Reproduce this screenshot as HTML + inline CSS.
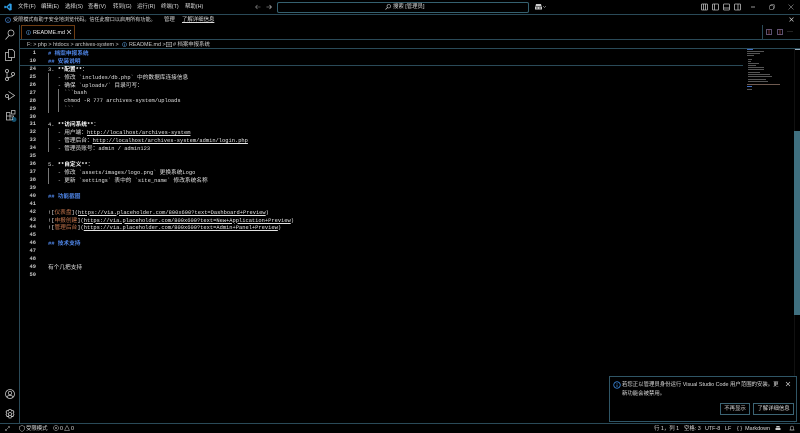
<!DOCTYPE html>
<html><head><meta charset="utf-8"><style>
html,body{margin:0;padding:0;width:800px;height:433px;overflow:hidden;background:#000}
body{position:relative;font-family:"Liberation Sans","Noto Sans CJK SC",sans-serif;color:#ddd;font-size:5.4px}
.a{position:absolute;white-space:pre}
.b{position:absolute;background:#2a4a58}
.ln{position:absolute;width:36px;text-align:right;left:0;font:bold 5.4px/8px "Liberation Mono",monospace;color:#c8c8c8}
.c{position:absolute;left:48px;font:5.4px/8px "Liberation Mono","Noto Sans CJK SC",monospace;color:#e0e0e0;white-space:pre}
.c i{font-style:normal;font-size:5.7px;font-family:"Noto Sans CJK SC",sans-serif;line-height:8px}
.h{color:#4f86e8;font-weight:bold}.w{color:#fff;font-weight:bold}.u{text-decoration:underline;color:#e4e4e4}.o{color:#c9784e}
.g{position:absolute;width:1px;background:#777}
svg{position:absolute;overflow:visible}
.m{position:absolute;height:1px;background:#555}
.btn{position:absolute;border:1px solid #3c6474;color:#ddd;font-size:5.4px;line-height:10px;text-align:center;top:403px;height:10px}
</style></head><body>
<!-- title bar -->
<svg style="left:4px;top:3px" width="8" height="8" viewBox="0 0 24 24"><path d="M17 1 7 11 3 8 1 9v6l2 1 4-3 10 10 6-2V3zM17 7v10l-6-5z" fill="#2f9fe8"/></svg>
<div class="a" style="left:18px;top:3px;line-height:8px;color:#ddd">文件(F)</div>
<div class="a" style="left:41px;top:3px;line-height:8px">编辑(E)</div>
<div class="a" style="left:65px;top:3px;line-height:8px">选择(S)</div>
<div class="a" style="left:88px;top:3px;line-height:8px">查看(V)</div>
<div class="a" style="left:113px;top:3px;line-height:8px">转到(G)</div>
<div class="a" style="left:137px;top:3px;line-height:8px">运行(R)</div>
<div class="a" style="left:161px;top:3px;line-height:8px">终端(T)</div>
<div class="a" style="left:185px;top:3px;line-height:8px">帮助(H)</div>
<svg style="left:255px;top:4px" width="6" height="6" viewBox="0 0 12 12"><path d="M11 6H1M5 2 1 6l4 4" fill="none" stroke="#888" stroke-width="1.2"/></svg>
<svg style="left:266px;top:4px" width="6" height="6" viewBox="0 0 12 12"><path d="M1 6h10M7 2l4 4-4 4" fill="none" stroke="#bbb" stroke-width="1.2"/></svg>
<div class="a" style="left:277px;top:2px;width:250px;height:9px;border:1px solid #35606f;border-radius:2px"></div>
<svg style="left:385px;top:4px" width="6" height="6" viewBox="0 0 12 12"><circle cx="7.5" cy="4.5" r="3.5" fill="none" stroke="#ccc" stroke-width="1.2"/><path d="M5 7 1 11" stroke="#ccc" stroke-width="1.2"/></svg>
<div class="a" style="left:393px;top:3px;line-height:8px">搜索 [管理员]</div>
<svg style="left:534px;top:3px" width="9" height="8" viewBox="0 0 18 16"><path d="M4 2h10l1 4H3zM2 7h14v6H2zM5 14h8" fill="#ccc"/><circle cx="6" cy="10" r="1.3" fill="#000"/><circle cx="12" cy="10" r="1.3" fill="#000"/></svg>
<svg style="left:543px;top:6px" width="3" height="2" viewBox="0 0 6 4"><path d="M0 0l3 3 3-3" fill="none" stroke="#ccc"/></svg>
<svg style="left:701px;top:3px" width="68" height="8" viewBox="0 0 68 8" fill="none" stroke="#bbb" stroke-width=".8"><rect x=".5" y="1" width="6" height="6" rx=".7"/><path d="M2.5 1v6M4.5 1v6"/><rect x="11.5" y="1" width="6" height="6" rx=".7"/><path d="M13.5 1v6"/><rect x="22.5" y="1" width="6" height="6" rx=".7"/><path d="M22.5 5h6"/><rect x="33.5" y="1" width="6" height="6" rx=".7"/><path d="M37 1v6"/><path d="M50 4h4"/></svg>
<svg style="left:769px;top:4px" width="6" height="6" viewBox="0 0 12 12" fill="none" stroke="#bbb"><rect x="1.5" y="3.5" width="7" height="7"/><path d="M3.5 3.5v-2h7v7h-2"/></svg>
<svg style="left:788px;top:4px" width="6" height="6" viewBox="0 0 12 12" stroke="#bbb"><path d="M1 1l10 10M11 1 1 11"/></svg>
<div class="b" style="left:0;top:14px;width:800px;height:1px"></div>
<!-- banner -->
<svg style="left:5px;top:17px" width="6" height="6" viewBox="0 0 12 12"><circle cx="6" cy="6" r="5" fill="none" stroke="#4a90e8" stroke-width="1.2"/><path d="M6 5v4M6 3v1" stroke="#4a90e8" stroke-width="1.2"/></svg>
<div class="a" style="left:13px;top:16px;line-height:8px;font-size:5.1px">受限模式有助于安全地浏览代码。信任此窗口以启用所有功能。</div>
<div class="a" style="left:164px;top:16px;line-height:8px">管理</div>
<div class="a" style="left:182px;top:16px;line-height:8px;text-decoration:underline">了解详细信息</div>
<svg style="left:789px;top:17px" width="5" height="5" viewBox="0 0 10 10" stroke="#ccc" stroke-width="1.2"><path d="M1 1l8 8M9 1 1 9"/></svg>
<!-- activity bar -->
<div class="b" style="left:19px;top:25px;width:1px;height:398px"></div>
<svg style="left:5px;top:29px" width="10" height="11" viewBox="0 0 20 22" fill="none" stroke="#ccc" stroke-width="1.5"><circle cx="12" cy="8" r="6"/><path d="M8 13 1 21"/></svg>
<svg style="left:5px;top:49px" width="10" height="12" viewBox="0 0 20 24" fill="none" stroke="#ccc" stroke-width="1.5"><path d="M7 1h8l4 4v12H7zM7 7H1v16h12v-6"/></svg>
<svg style="left:5px;top:69px" width="10" height="12" viewBox="0 0 20 24" fill="none" stroke="#ccc" stroke-width="1.5"><circle cx="4" cy="4" r="3"/><circle cx="4" cy="20" r="3"/><circle cx="16" cy="10" r="3"/><path d="M4 7v10M16 13c0 3-6 3-12 5"/></svg>
<svg style="left:5px;top:90px" width="10" height="11" viewBox="0 0 20 22" fill="none" stroke="#ccc" stroke-width="1.5"><path d="M7 3l12 8-12 8v-5"/><circle cx="4" cy="12" r="3"/></svg>
<svg style="left:6px;top:110px" width="11" height="12" viewBox="0 0 22 24" fill="none" stroke="#ccc" stroke-width="1.5"><path d="M1 5h7v7h7v8H1zM1 12h7v8M11 1h7v7h-7z"/><circle cx="16" cy="19" r="5" fill="#12506f" stroke="none"/></svg>
<div class="a" style="left:11px;top:115px;font-size:4.5px;line-height:7px">1</div>
<svg style="left:5px;top:389px" width="10" height="10" viewBox="0 0 20 20" fill="none" stroke="#ccc" stroke-width="1.5"><circle cx="10" cy="10" r="9"/><circle cx="10" cy="8" r="3.5"/><path d="M4 16c1-4 11-4 12 0"/></svg>
<svg style="left:5px;top:409px" width="10" height="10" viewBox="0 0 20 20" fill="none" stroke="#ccc" stroke-width="1.5"><circle cx="10" cy="10" r="3"/><path d="M8 1h4l1 3 3-1 2 3-2 3 2 2-2 4-3-1-1 4H8l-1-4-3 1-2-4 2-2-2-3 2-3 3 1z"/></svg>
<!-- tab -->
<div class="a" style="left:21px;top:25px;width:52px;height:13px;border:1px solid #6e3c12"></div>
<svg style="left:26px;top:30px" width="5" height="5" viewBox="0 0 10 10"><circle cx="5" cy="5" r="4" fill="none" stroke="#5aa0e0"/><path d="M5 4v4M5 2v1" stroke="#5aa0e0"/></svg>
<div class="a" style="left:33px;top:28.5px;line-height:8px;color:#eee">README.md</div>
<svg style="left:67px;top:30px" width="4" height="4" viewBox="0 0 8 8" stroke="#ddd" stroke-width="1.1"><path d="M0 0l8 8M8 0 0 8"/></svg>
<div class="b" style="left:762px;top:25px;width:1px;height:14px"></div>
<svg style="left:766px;top:29px" width="6" height="6" viewBox="0 0 12 12" fill="none" stroke="#b8a0e0"><rect x="1" y="1" width="10" height="10"/><path d="M6 1v10" stroke="#e06070"/></svg>
<svg style="left:777px;top:29px" width="6" height="6" viewBox="0 0 12 12" fill="none" stroke="#b8a0e0"><rect x="1" y="1" width="10" height="10"/><path d="M6 1v10" stroke="#e06070"/></svg>
<div class="a" style="left:787px;top:29px;line-height:6px;font-size:6px;color:#bbb">···</div>
<div class="b" style="left:20px;top:39px;width:780px;height:1px"></div>
<!-- breadcrumb -->
<div class="a" style="left:27px;top:40.5px;line-height:8px;color:#ccc">F: &gt; php &gt; htdocs &gt; archives-system &gt;</div>
<svg style="left:122px;top:42px" width="5" height="5" viewBox="0 0 10 10"><circle cx="5" cy="5" r="4" fill="none" stroke="#5aa0e0"/><path d="M5 4v4M5 2v1" stroke="#5aa0e0"/></svg>
<div class="a" style="left:129px;top:40.5px;line-height:8px;color:#ccc">README.md &gt;</div>
<svg style="left:166px;top:42px" width="6" height="5" viewBox="0 0 12 10" fill="none" stroke="#ccc"><rect x=".5" y=".5" width="11" height="9"/><path d="M3 4h6M3 6h6"/></svg>
<div class="a" style="left:173px;top:40.5px;line-height:8px;color:#ccc"># 档案申报系统</div>
<div class="b" style="left:20px;top:48px;width:780px;height:1px"></div>
<!-- sticky -->
<div class="ln" style="top:49px">1</div><div class="c h" style="top:49px"># <i>档案申报系统</i></div>
<div class="ln" style="top:57px">10</div><div class="c h" style="top:57px">## <i>安装说明</i></div>
<div class="b" style="left:20px;top:65px;width:723px;height:1px"></div>
<!-- editor -->
<div class="ln" style="top:65px">24</div><div class="c" style="top:65px">3. <span class="w">**<i>配置</i>**</span><i>：</i></div>
<div class="ln" style="top:73px">25</div><div class="c" style="top:73px">   - <i>修改</i> &#96;includes/db.php&#96; <i>中的数据库连接信息</i></div>
<div class="ln" style="top:81px">26</div><div class="c" style="top:81px">   - <i>确保</i> &#96;uploads/&#96; <i>目录可写：</i></div>
<div class="ln" style="top:89px">27</div><div class="c" style="top:89px">     &#96;&#96;&#96;bash</div>
<div class="ln" style="top:97px">28</div><div class="c" style="top:97px">     chmod -R 777 archives-system/uploads</div>
<div class="ln" style="top:105px">29</div><div class="c" style="top:105px">     &#96;&#96;&#96;</div>
<div class="ln" style="top:112.5px">30</div>
<div class="ln" style="top:120px">31</div><div class="c" style="top:120px">4. <span class="w">**<i>访问系统</i>**</span><i>：</i></div>
<div class="ln" style="top:128px">32</div><div class="c" style="top:128px">   - <i>用户端：</i><span class="u">http://localhost/archives-system</span></div>
<div class="ln" style="top:136px">33</div><div class="c" style="top:136px">   - <i>管理后台：</i><span class="u">http://localhost/archives-system/admin/login.php</span></div>
<div class="ln" style="top:144px">34</div><div class="c" style="top:144px">   - <i>管理员账号：</i>admin / admin123</div>
<div class="ln" style="top:152px">35</div>
<div class="ln" style="top:160px">36</div><div class="c" style="top:160px">5. <span class="w">**<i>自定义</i>**</span><i>：</i></div>
<div class="ln" style="top:167.5px">37</div><div class="c" style="top:167.5px">   - <i>修改</i> &#96;assets/images/logo.png&#96; <i>更换系统</i>Logo</div>
<div class="ln" style="top:175.5px">38</div><div class="c" style="top:175.5px">   - <i>更新</i> &#96;settings&#96; <i>表中的</i> &#96;site_name&#96; <i>修改系统名称</i></div>
<div class="ln" style="top:183.5px">39</div>
<div class="ln" style="top:191.5px">40</div><div class="c h" style="top:191.5px">## <i>功能截图</i></div>
<div class="ln" style="top:199.5px">41</div>
<div class="ln" style="top:207.5px">42</div><div class="c" style="top:207.5px">![<span class="o"><i>仪表盘</i></span>](<span class="u">https://via.placeholder.com/800x600?text=Dashboard+Preview</span>)</div>
<div class="ln" style="top:215.5px">43</div><div class="c" style="top:215.5px">![<span class="o"><i>申报创建</i></span>](<span class="u">https://via.placeholder.com/800x600?text=New+Application+Preview</span>)</div>
<div class="ln" style="top:223px">44</div><div class="c" style="top:223px">![<span class="o"><i>管理后台</i></span>](<span class="u">https://via.placeholder.com/800x600?text=Admin+Panel+Preview</span>)</div>
<div class="ln" style="top:231px">45</div>
<div class="ln" style="top:239px">46</div><div class="c h" style="top:239px">## <i>技术支持</i></div>
<div class="ln" style="top:247px">47</div>
<div class="ln" style="top:255px">48</div>
<div class="ln" style="top:263px">49</div><div class="c" style="top:263px"><i>有个几把支持</i></div>
<div class="ln" style="top:271px">50</div>
<!-- guides -->
<div class="g" style="left:48px;top:73px;height:40px"></div>
<div class="g" style="left:58px;top:89px;height:23px"></div>
<div class="g" style="left:48px;top:128px;height:24px"></div>
<div class="g" style="left:48px;top:168px;height:16px"></div>
<!-- minimap -->
<div class="m" style="left:747px;top:49px;width:6px;background:#3f6cc0"></div>
<div class="m" style="left:747px;top:51px;width:17px"></div>
<div class="m" style="left:747px;top:53px;width:13px"></div>
<div class="m" style="left:747px;top:55px;width:7px"></div>
<div class="m" style="left:748px;top:59px;width:4px"></div>
<div class="m" style="left:748px;top:61px;width:3px"></div>
<div class="m" style="left:748px;top:63px;width:11px"></div>
<div class="m" style="left:748px;top:65px;width:8px"></div>
<div class="m" style="left:748px;top:67px;width:16px"></div>
<div class="m" style="left:748px;top:69px;width:16px"></div>
<div class="m" style="left:748px;top:72px;width:12px"></div>
<div class="m" style="left:748px;top:74px;width:22px"></div>
<div class="m" style="left:748px;top:76px;width:24px"></div>
<div class="m" style="left:748px;top:79px;width:18px"></div>
<div class="m" style="left:748px;top:81px;width:20px"></div>
<div class="m" style="left:747px;top:84px;width:33px;background:#6f5a50"></div>
<div class="m" style="left:747px;top:86px;width:5px;background:#3f6cc0"></div>
<div class="m" style="left:747px;top:89px;width:5px"></div>
<div class="b" style="left:794px;top:49px;width:6px;height:1px;background:#9ab"></div>
<div class="a" style="left:794px;top:49px;width:1px;height:374px;background:#111"></div>
<div class="a" style="left:794px;top:131px;width:6px;height:184px;background:#3f6f7f"></div>
<!-- notification -->
<div class="a" style="left:609px;top:376px;width:186px;height:44px;background:#000;border:1px solid #2f5566"></div>
<svg style="left:613px;top:381px" width="8" height="8" viewBox="0 0 16 16"><circle cx="8" cy="8" r="6.5" fill="none" stroke="#3f8fe8" stroke-width="1.5"/><path d="M8 7v5M8 4v1.5" stroke="#3f8fe8" stroke-width="1.5"/></svg>
<div class="a" style="left:622px;top:381px;line-height:9px;color:#ddd">若您正以管理员身份运行 Visual Studio Code 用户范围的安装。更</div>
<div class="a" style="left:622px;top:390px;line-height:9px;color:#ddd">新功能会被禁用。</div>
<svg style="left:786px;top:382px" width="4" height="4" viewBox="0 0 8 8" stroke="#ddd" stroke-width="1.1"><path d="M0 0l8 8M8 0 0 8"/></svg>
<div class="btn" style="left:720px;width:28px">不再显示</div>
<div class="btn" style="left:753px;width:39px">了解详细信息</div>
<!-- status -->
<div class="b" style="left:0;top:423px;width:800px;height:1px"></div>
<svg style="left:5px;top:426px" width="5" height="5" viewBox="0 0 10 10" fill="none" stroke="#bbb"><path d="M1 9 9 1M6 1h3v3M1 6v3h3"/></svg>
<svg style="left:19px;top:425px" width="6" height="7" viewBox="0 0 12 14" fill="none" stroke="#ccc"><path d="M6 1l5 2v4c0 3-3 5-5 6-2-1-5-3-5-6V3z"/></svg>
<div class="a" style="left:26px;top:424.5px;line-height:8px">受限模式</div>
<svg style="left:53px;top:425px" width="6" height="6" viewBox="0 0 12 12" fill="none" stroke="#ccc"><circle cx="6" cy="6" r="5"/><path d="M4 4l4 4M8 4 4 8"/></svg>
<div class="a" style="left:60px;top:424.5px;line-height:8px">0</div>
<svg style="left:64px;top:425px" width="6" height="6" viewBox="0 0 12 12" fill="none" stroke="#ccc"><path d="M6 1l5 10H1z"/></svg>
<div class="a" style="left:71px;top:424.5px;line-height:8px">0</div>
<div class="a" style="left:654px;top:424.5px;line-height:8px">行 1，列 1</div>
<div class="a" style="left:684px;top:424.5px;line-height:8px">空格: 3</div>
<div class="a" style="left:705px;top:424.5px;line-height:8px">UTF-8</div>
<div class="a" style="left:725px;top:424.5px;line-height:8px">LF</div>
<div class="a" style="left:737px;top:424.5px;line-height:8px">{ }  Markdown</div>
<svg style="left:775px;top:425px" width="6" height="6" viewBox="0 0 12 12"><path d="M3 2h6l1 3H2zM1 6h10v4H1z" fill="#ccc"/></svg>
<svg style="left:789px;top:425px" width="6" height="6" viewBox="0 0 12 12" fill="none" stroke="#ccc"><path d="M3 10V5a3 3 0 0 1 6 0v5zM1 10h10"/></svg>
</body></html>
